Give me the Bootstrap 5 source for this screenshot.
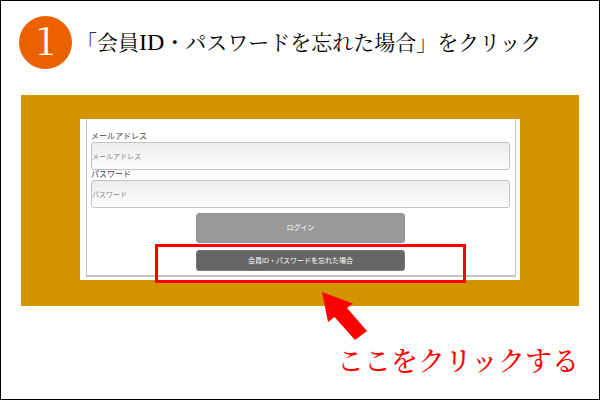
<!DOCTYPE html>
<html lang="ja">
<head>
<meta charset="utf-8">
<meta name="viewport" content="width=device-width, initial-scale=1">
<title>会員ID・パスワードを忘れた場合</title>
<link rel="stylesheet" href="https://cdn.jsdelivr.net/npm/bootstrap@5.3.0/dist/css/bootstrap.min.css">
<style>
  body { font-family: "Liberation Sans", "Noto Sans CJK JP", sans-serif; background: #fff; color: #000; }
  .guide { border: 1px solid #000; padding: 15px 20px 16px 18px; }
  .step-number { width: 53px; height: 53px; padding-bottom: 8px; background: #eb6100; font: 38px/1 "Noto Serif CJK JP", "Liberation Serif", serif; }
  .step-title { font: 400 21px/32px "Noto Serif CJK JP", "Noto Sans CJK JP", serif; padding: 0 0 4px 4px; }
  .step-title .latin { font: 24px/24px "Liberation Serif", serif; }
  .stage { background: #d19500; margin: 26px 0 0 2px; padding: 24px 59px 26px; }
  .capture { padding: 0 4px 3px 6px; }
  .login { border: solid #c4c4c6; border-width: 0 1px 2px; padding: 13px 5px 4px 4px; }
  .login label { font-size: 8px; line-height: 10px; color: #444; }
  .login .form-control { height: 28px; padding: 0; border: 1px solid #c2c2c4; border-radius: 3px; font-size: 7px; background: linear-gradient(#ededed, #fdfdfd); }
  .login .form-control::placeholder { color: #888; }
  .login .btn { font-size: 7px; line-height: 10px; padding: 0; border-radius: 3px; color: #fff; }
  .login .btn-login { height: 30px; margin-top: 5px; background: #999; border: 1px solid #929292; }
  .login .btn-forgot { height: 21px; margin-top: 7px; background: #666; border: 1px solid #777; }
  .highlight { border: 3px solid #f00; inset: auto 54px -3px 75px; height: 39px; pointer-events: none; }
  .pointer { width: 46px; height: 49px; left: 300px; top: 197px; }
  .callout { margin-top: 34px; font: 500 27px/40px "Noto Serif CJK JP", "Noto Sans CJK JP", serif; color: #f00; }
</style>
</head>
<body>
<main class="guide min-vh-100">
  <header class="d-flex align-items-center">
    <span class="step-number rounded-circle text-white d-flex align-items-center justify-content-center flex-shrink-0">1</span>
    <h1 class="step-title mb-0 text-nowrap">「会員<span class="latin">ID</span>・パスワードを忘れた場合」をクリック</h1>
  </header>
  <section class="stage position-relative">
    <div class="capture bg-white position-relative">
      <form class="login">
        <label class="d-block" for="mail">メールアドレス</label>
        <input class="form-control" id="mail" type="email" placeholder="メールアドレス">
        <label class="d-block" for="password">パスワード</label>
        <input class="form-control" id="password" type="password" placeholder="パスワード">
        <button class="btn btn-login d-block w-50 mx-auto" type="button">ログイン</button>
        <button class="btn btn-forgot d-block w-50 mx-auto" type="button">会員ID・パスワードを忘れた場合</button>
      </form>
      <div class="highlight position-absolute"></div>
    </div>
    <svg class="pointer position-absolute" viewBox="0 0 46 49" aria-hidden="true">
      <path d="M1 0 32 11.500 26 16 46 39 34 48 13.500 25 7 30Z" fill="#f00"/>
    </svg>
  </section>
  <p class="callout mb-0 text-end text-nowrap">ここをクリックする</p>
</main>
<script src="https://cdn.jsdelivr.net/npm/bootstrap@5.3.0/dist/js/bootstrap.bundle.min.js"></script>
</body>
</html>
